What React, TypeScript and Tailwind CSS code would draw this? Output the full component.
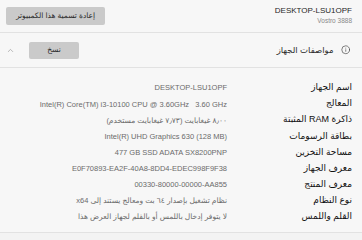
import { ChevronUp, Info } from "lucide-react";

const specs: { label: string; value: string; ltr?: boolean }[] = [
  { label: "اسم الجهاز", value: "DESKTOP-LSU1OPF", ltr: true },
  {
    label: "المعالج",
    value: "Intel(R) Core(TM) i3-10100 CPU @ 3.60GHz\u00a0\u00a0 3.60 GHz",
    ltr: true,
  },
  { label: "ذاكرة RAM المثبتة", value: "٨٫٠٠ غيغابايت (٧٫٧٣ غيغابايت مستخدم)" },
  { label: "بطاقة الرسومات", value: "Intel(R) UHD Graphics 630 (128 MB)", ltr: true },
  { label: "مساحة التخزين", value: "477 GB SSD ADATA SX8200PNP", ltr: true },
  { label: "معرف الجهاز", value: "E0F70893-EA2F-40A8-8DD4-EDEC998F9F38", ltr: true },
  { label: "معرف المنتج", value: "00330-80000-00000-AA855", ltr: true },
  { label: "نوع النظام", value: "نظام تشغيل بإصدار ٦٤ بت ومعالج يستند إلى x64" },
  { label: "القلم واللمس", value: "لا يتوفر إدخال باللمس أو بالقلم لجهاز العرض هذا" },
];

export default function App() {
  return (
    <div
      dir="rtl"
      className="w-[362px] h-[240px] overflow-hidden bg-[#f3f3f3] text-[#1b1b1b]"
      style={{ fontFamily: '"Segoe UI", "Liberation Sans", "DejaVu Sans", sans-serif' }}
    >
      {/* Device name */}
      <div className="flex h-[33px] items-center justify-between border-b border-[#e2e2e2] bg-[#f7f7f7] pr-[10px] pl-[6px]">
        <div className="flex flex-col items-start leading-none">
          <span dir="ltr" className="text-[8px] text-[#1f1f1f]">
            DESKTOP-LSU1OPF
          </span>
          <span dir="ltr" className="mt-[3px] text-[6.5px] text-[#8a8a8a]">
            Vostro 3888
          </span>
        </div>
        <button className="flex h-[18px] w-[99px] items-center justify-center rounded-[2px] bg-[#cacaca] text-[7.5px] text-[#2a2a2a]">
          إعادة تسمية هذا الكمبيوتر
        </button>
      </div>

      {/* Section header */}
      <div className="flex h-[35px] items-center border-b border-[#e2e2e2] bg-[#f7f7f7] pr-[12px] pl-[6px]">
        <Info className="h-[9.5px] w-[9.5px] text-[#3a3a3a]" strokeWidth={1.6} />
        <span className="mr-[7px] text-[8.5px] text-[#2a2a2a]">مواصفات الجهاز</span>
        <div className="flex-1" />
        <button className="flex h-[17px] w-[50px] items-center justify-center rounded-[2px] bg-[#cacaca] text-[7.5px] text-[#2a2a2a]">
          نسخ
        </button>
        <ChevronUp className="mr-[14px] h-[9px] w-[9px] text-[#8a8a8a]" strokeWidth={1.5} />
      </div>

      {/* Specs */}
      <div className="flex flex-col border-b border-[#e2e2e2] bg-[#f7f7f7] pt-[12px] pb-[7px] pr-[10px]">
        {specs.map((s) => (
          <div key={s.label} className="flex h-[16.1px] items-center">
            <div className="w-[125px] shrink-0 text-[9px] text-[#111]">{s.label}</div>
            <div className="flex-1 whitespace-nowrap text-[7.5px] text-[#6b6b6b]">
              <span dir={s.ltr ? "ltr" : "rtl"}>{s.value}</span>
            </div>
          </div>
        ))}
      </div>
    </div>
  );
}
